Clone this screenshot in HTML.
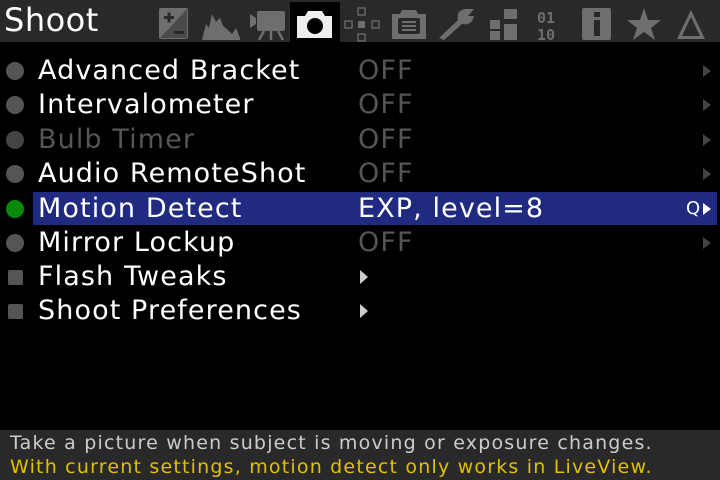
<!DOCTYPE html><html><head><style>
body{margin:0;width:720px;height:480px;background:#000;overflow:hidden;position:relative;font-family:"DejaVu Sans","Liberation Sans",sans-serif;}
#top{position:absolute;left:0;top:0;width:720px;height:42px;background:#292929;}
#title{position:absolute;left:4px;top:0;font-size:32px;color:#fff;line-height:40px;letter-spacing:0.5px;}
#tab{position:absolute;left:290px;top:2px;width:50px;height:40px;background:#000;}
.r{position:absolute;left:0;height:33px;width:720px;font-size:27px;letter-spacing:1.1px;line-height:33px;color:#fff;}
.r .n{position:absolute;left:38px;}
.r .v{position:absolute;left:358px;color:#555;}
.r .d{position:absolute;left:6px;top:8px;width:18px;height:18px;border-radius:50%;background:#555;}
.r .s{position:absolute;left:8px;top:10px;width:15px;height:15px;border-radius:2px;background:#555;}
.r .a{position:absolute;left:703px;top:11px;width:0;height:0;border-left:8px solid #444;border-top:6px solid transparent;border-bottom:6px solid transparent;}
.r .t{position:absolute;left:360px;top:10px;width:0;height:0;border-left:8px solid #ccc;border-top:7px solid transparent;border-bottom:7px solid transparent;}
#hl{position:absolute;left:33px;top:192px;width:684px;height:33px;background:#1f2a80;}
#bot{position:absolute;left:0;top:430px;width:720px;height:50px;background:#292929;font-size:19px;letter-spacing:1.2px;line-height:22px;}
</style></head><body>
<div id="top"></div>
<div id="title">Shoot</div>
<div id="tab"></div>
<svg width="720" height="42" style="position:absolute;left:0;top:0">
<g fill="#6e6e6e">
<rect x="159" y="8" width="29" height="31" rx="2"/>
<path d="M160 38 L187 9 L187 38Z" fill="#4a4a4a"/>
<path d="M164 16h10v3h-10zM167.5 12.5h3v10h-3z" fill="#292929"/>
<path d="M174 31h10v3h-10z" fill="#292929"/>
<path d="M202 40 L206 24 L209 28 L212 14 L216 22 L220 18 L223 26 L228 30 L232 34 L236 28 L240 38 L240 40Z"/>
<path d="M250 14 L256 18 L256 24 L250 28Z"/><rect x="257" y="11" width="28" height="20" rx="2"/>
<path d="M264 31 L259 40 M271 31 L271 40 M278 31 L283 40" stroke="#6e6e6e" stroke-width="2.5"/>
<path d="M297 16 h8 l3 -5 h14 l3 5 h7 v22 h-35z" fill="#eee"/><circle cx="315" cy="26" r="8" fill="#000"/>
<g fill="none" stroke="#6e6e6e" stroke-width="1.3"><rect x="358" y="8" width="7" height="7"/><rect x="345" y="21" width="7" height="7"/><rect x="372" y="21" width="7" height="7"/><rect x="358" y="34" width="7" height="7"/></g>
<rect x="358" y="21" width="7" height="7"/>
<path d="M392 14 h8 l2 -4 h14 l2 4 h8 v25 h-34z"/><rect x="398" y="18" width="22" height="16" rx="2" fill="#292929"/>
<path d="M402 22h14M402 26h14M402 30h14" stroke="#6e6e6e" stroke-width="2"/>
<path d="M439 38 L458 20 Q456 10 466 9 L474 9 L468 16 L474 16 Q472 26 462 24 L444 40Z"/>
<rect x="490" y="20" width="10" height="9"/><rect x="504" y="9" width="13" height="10"/><rect x="490" y="31" width="10" height="9"/><rect x="504" y="24" width="13" height="16"/>
<text x="537" y="23" font-size="15" font-family="DejaVu Sans Mono" font-weight="bold">01</text>
<text x="537" y="40" font-size="15" font-family="DejaVu Sans Mono" font-weight="bold">10</text>
<rect x="582" y="8" width="29" height="32" rx="2"/><rect x="594" y="12" width="6" height="5" fill="#292929"/><rect x="594" y="20" width="6" height="16" fill="#292929"/>
<path d="M644 8 L648 20 L661 20 L651 28 L655 40 L644 32 L633 40 L637 28 L627 20 L640 20Z"/>
<path d="M691 10 L705 39 L677 39Z M691 17 L682 36 L700 36Z" fill-rule="evenodd"/>
</g></svg>
<div id="hl"></div>
<div class="r" style="top:54px"><div class="d"></div><span class="n">Advanced Bracket</span><span class="v">OFF</span><div class="a"></div></div>
<div class="r" style="top:88px"><div class="d"></div><span class="n">Intervalometer</span><span class="v">OFF</span><div class="a"></div></div>
<div class="r" style="top:123px"><div class="d" style="background:#444"></div><span class="n" style="color:#555">Bulb Timer</span><span class="v">OFF</span><div class="a"></div></div>
<div class="r" style="top:157px"><div class="d"></div><span class="n">Audio RemoteShot</span><span class="v">OFF</span><div class="a"></div></div>
<div class="r" style="top:192px"><div class="d" style="background:#0a8a0a"></div><span class="n">Motion Detect</span><span class="v" style="color:#fff">EXP, level=8</span><span style="position:absolute;left:686px;font-size:18px;letter-spacing:0">Q</span><div class="a" style="border-left-color:#fff"></div></div>
<div class="r" style="top:226px"><div class="d"></div><span class="n">Mirror Lockup</span><span class="v">OFF</span><div class="a"></div></div>
<div class="r" style="top:260px"><div class="s"></div><span class="n">Flash Tweaks</span><div class="t"></div></div>
<div class="r" style="top:294px"><div class="s"></div><span class="n">Shoot Preferences</span><div class="t"></div></div>
<div id="bot"><div style="position:absolute;left:10px;top:2px;color:#ccc">Take a picture when subject is moving or exposure changes.</div><div style="position:absolute;left:10px;top:26px;color:#e0c000">With current settings, motion detect only works in LiveView.</div></div>
</body></html>
